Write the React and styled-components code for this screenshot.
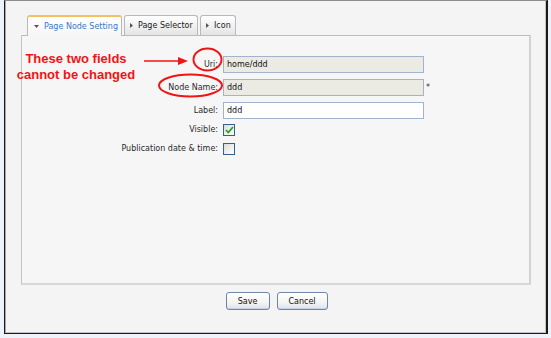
import React from "react";
import styled, { createGlobalStyle } from "styled-components";

const Global = createGlobalStyle`
  html, body { margin: 0; padding: 0; }
  body {
    background: #eef2fb;
    width: 551px;
    height: 338px;
    overflow: hidden;
    font-family: "DejaVu Sans", "Liberation Sans", sans-serif;
  }
`;

const Page = styled.div`
  padding-left: 4px;
`;

const Window = styled.div`
  position: relative;
  box-sizing: border-box;
  width: 544px;
  height: 334px;
  background: #f4f4f4;
  border-top: 1px solid #8c8c8c;
  border-left: 1px solid #1a1a1a;
  border-right: 2px solid #1a1a1a;
  border-bottom: 1px solid #1a1a1a;
  box-shadow: inset 1px 0 0 #a8a8a8, inset -1px -1px 0 #c4c4c4;
`;

const Body = styled.div`
  padding: 14px 15px 0 16px;
`;

const TabStrip = styled.div`
  display: flex;
  align-items: flex-start;
  gap: 2px;
  height: 20px;
  padding-left: 6px;
`;

const Tab = styled.div`
  position: relative;
  z-index: 1;
  box-sizing: border-box;
  display: flex;
  align-items: center;
  gap: 5px;
  height: ${(p) => (p.$active ? "21px" : "20px")};
  width: ${(p) => p.$w}px;
  padding-left: ${(p) => (p.$active ? "6px" : "5px")};
  font-size: 8px;
  color: ${(p) => (p.$active ? "#3a78c9" : "#222")};
  border: 1px solid #b9b9b9;
  border-bottom: none;
  border-top: ${(p) => (p.$active ? "2px solid #f2c060" : "1px solid #b9b9b9")};
  border-radius: 3px 3px 0 0;
  background: ${(p) =>
    p.$active
      ? "linear-gradient(#ffffff, #f6f6f6)"
      : "linear-gradient(#ffffff, #e4e4e4)"};
  white-space: nowrap;
`;

const Panel = styled.div`
  box-sizing: border-box;
  height: 250px;
  background: #f6f6f6;
  border-top: 1px solid #bcbcbc;
  border-left: 1px solid #c4c4c4;
  border-right: 2px solid #d2d2d2;
  border-bottom: 2px solid #d8d8d8;
  padding-top: 20px;
`;

const Row = styled.div`
  display: grid;
  grid-template-columns: 196px 201px auto;
  column-gap: 5px;
  align-items: center;
  height: ${(p) => p.$h}px;
  margin-top: ${(p) => p.$mt || 0}px;
`;

const Label = styled.div`
  text-align: right;
  font-size: 8px;
  color: #2a2a2a;
  white-space: nowrap;
`;

const Input = styled.div`
  box-sizing: border-box;
  height: 17px;
  display: flex;
  align-items: center;
  padding-left: 3px;
  font-size: 8px;
  color: #111;
  background: ${(p) => (p.$disabled ? "#ebeae3" : "#ffffff")};
  border: 1px solid #a2b4cb;
`;

const Star = styled.div`
  font-size: 8px;
  color: #333;
  margin-left: -3px;
`;

const Box = styled.div`
  box-sizing: border-box;
  width: 12px;
  height: 12px;
  border: 1px solid #33618f;
  background: linear-gradient(135deg, #dcdcd6, #ffffff);
  display: flex;
  align-items: center;
  justify-content: center;
`;

const Buttons = styled.div`
  display: flex;
  justify-content: center;
  gap: 7px;
  margin-top: 7px;
  padding-left: 1px;
`;

const Button = styled.div`
  box-sizing: border-box;
  width: ${(p) => p.$w}px;
  height: 18px;
  display: flex;
  align-items: center;
  justify-content: center;
  font-size: 8px;
  color: #111;
  border: 1px solid #6f86a6;
  border-radius: 3px;
  background: linear-gradient(#ffffff 0%, #f4f4f0 60%, #dfe3ee 100%);
  box-shadow: inset 0 -1px 0 #c6d2e8;
`;

const Note = styled.div`
  position: absolute;
  left: 11px;
  top: 50px;
  width: 120px;
  text-align: center;
  font-family: "Liberation Sans", Arial, sans-serif;
  font-weight: bold;
  font-size: 13px;
  line-height: 16px;
  color: #f01414;
`;

const Overlay = styled.svg`
  position: absolute;
  left: 0;
  top: 0;
  pointer-events: none;
`;

const Arrow = ({ dir }) =>
  dir === "down" ? (
    <svg width="5" height="3" viewBox="0 0 5 3">
      <path d="M0 0h5L2.5 3z" fill="#555" />
    </svg>
  ) : (
    <svg width="3" height="5" viewBox="0 0 3 5">
      <path d="M0 0v5l3-2.5z" fill="#555" />
    </svg>
  );

const Check = () => (
  <svg width="9" height="8" viewBox="0 0 9 8">
    <path d="M1 4l2.3 2.5L8 1" fill="none" stroke="#21a121" strokeWidth="1.8" />
  </svg>
);

export default function App() {
  return (
    <>
      <Global />
      <Page>
        <Window>
          <Body>
            <TabStrip>
              <Tab $active $w={95}>
                <Arrow dir="down" />
                <span>Page Node Setting</span>
              </Tab>
              <Tab $w={74}>
                <Arrow dir="right" />
                <span>Page Selector</span>
              </Tab>
              <Tab $w={36}>
                <Arrow dir="right" />
                <span>Icon</span>
              </Tab>
            </TabStrip>
            <Panel>
              <Row $h={17}>
                <Label>Uri:</Label>
                <Input $disabled>home/ddd</Input>
              </Row>
              <Row $h={17} $mt={6}>
                <Label>Node Name:</Label>
                <Input $disabled>ddd</Input>
                <Star>*</Star>
              </Row>
              <Row $h={17} $mt={6}>
                <Label>Label:</Label>
                <Input>ddd</Input>
              </Row>
              <Row $h={19} $mt={1}>
                <Label>Visible:</Label>
                <Box>
                  <Check />
                </Box>
              </Row>
              <Row $h={19}>
                <Label>Publication date &amp; time:</Label>
                <Box />
              </Row>
            </Panel>
            <Buttons>
              <Button $w={44}>Save</Button>
              <Button $w={51}>Cancel</Button>
            </Buttons>
          </Body>
          <Note>
            These two fields
            <br />
            cannot be changed
          </Note>
          <Overlay width="541" height="332" viewBox="0 0 541 332">
            <line x1="139" y1="60" x2="175" y2="60" stroke="#f01414" strokeWidth="1.5" />
            <path d="M183 60L173 56v8z" fill="#f01414" />
            <ellipse cx="202.5" cy="58.5" rx="14" ry="11" fill="none" stroke="#f01414" strokeWidth="2" />
            <ellipse cx="185.5" cy="84.5" rx="31.5" ry="11" fill="none" stroke="#f01414" strokeWidth="2" />
          </Overlay>
        </Window>
      </Page>
    </>
  );
}
